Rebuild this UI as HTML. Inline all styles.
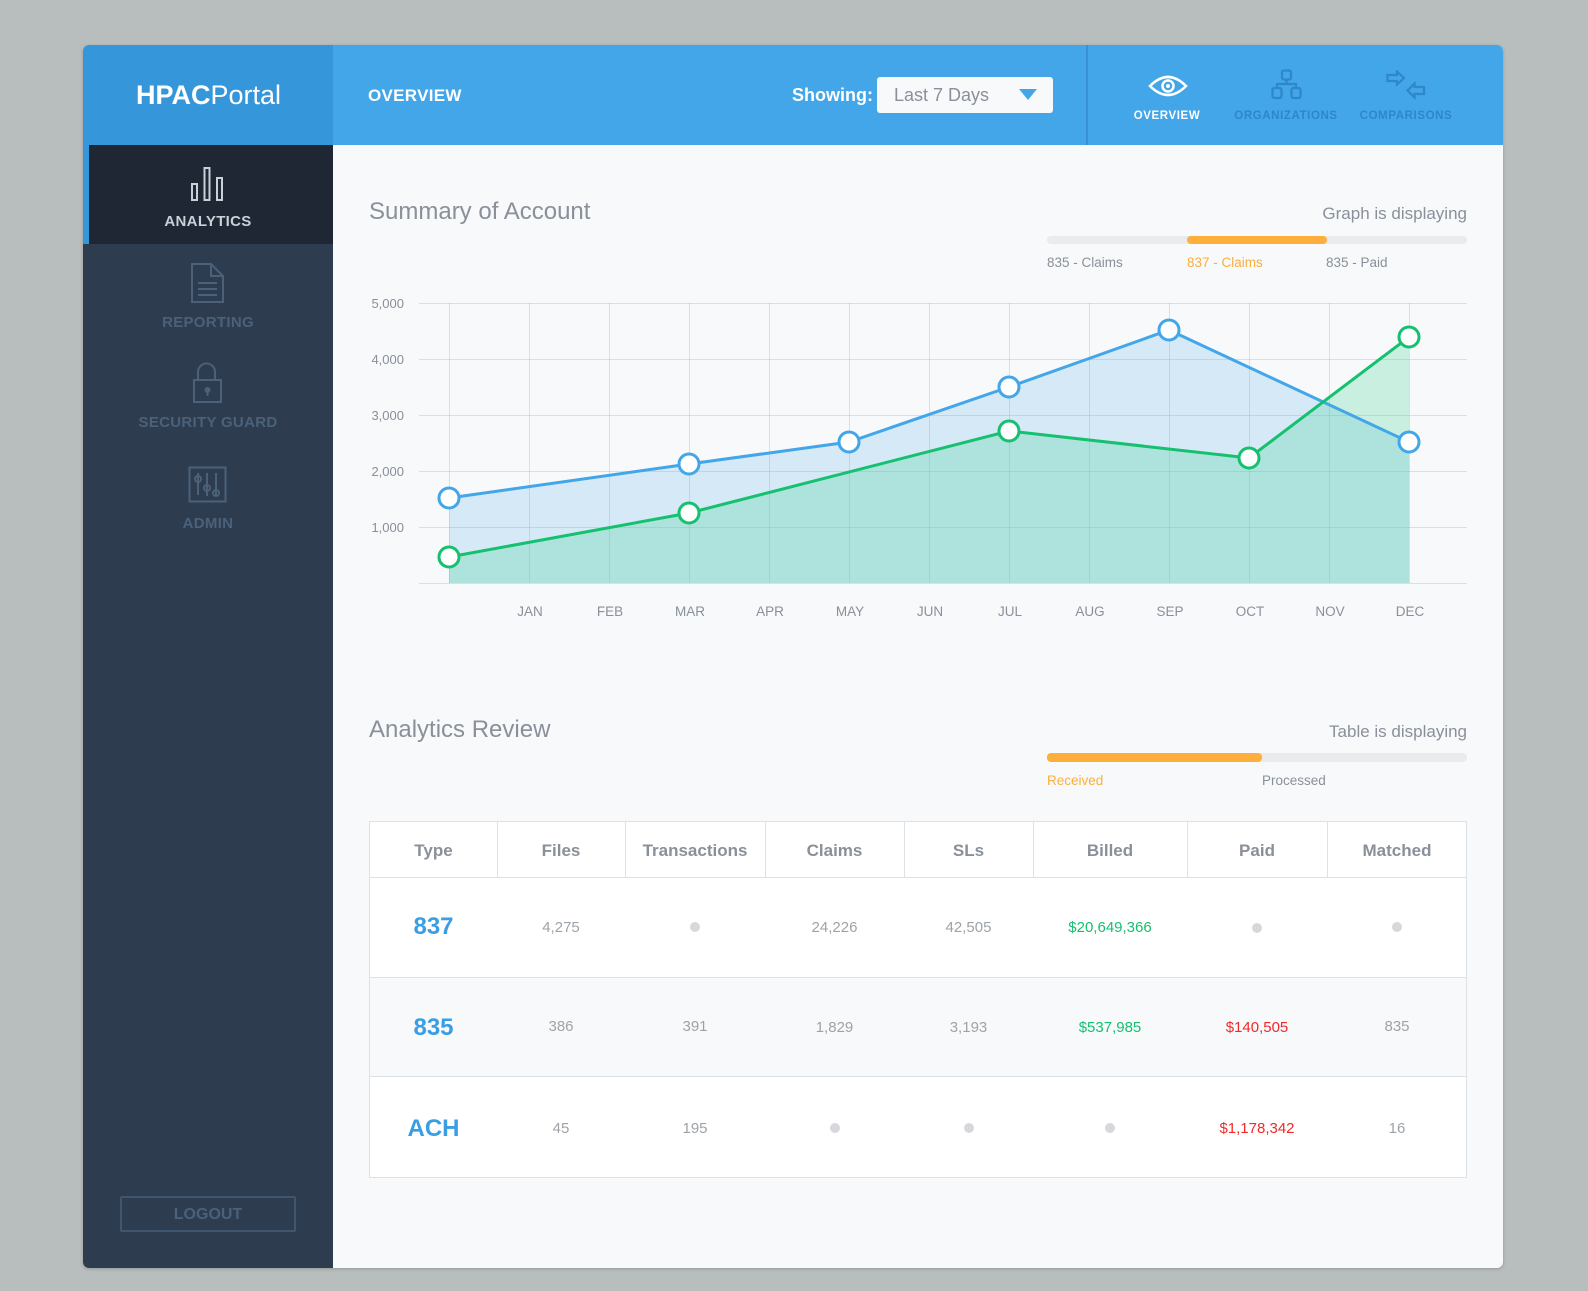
<!DOCTYPE html>
<html><head><meta charset="utf-8"><style>
*{margin:0;padding:0;box-sizing:border-box}
body{width:1588px;height:1291px;background:#b8bdbd;position:relative;overflow:hidden;font-family:"Liberation Sans",sans-serif}
.a{position:absolute;white-space:nowrap}
#card{position:absolute;left:83px;top:45px;width:1420px;height:1223px;border-radius:6px;overflow:hidden;background:#f7f9fb;box-shadow:0 1px 3px rgba(0,0,0,.2)}
.side{color:#4b6179;font-size:15px;font-weight:bold;letter-spacing:.3px;text-align:center;width:250px;left:83px}
.th{color:#8a9099;font-size:17px;font-weight:bold;text-align:center;top:841px}
.td{color:#9ea3a8;font-size:15px;text-align:center}
.ty{color:#3a9ee4;font-size:24px;font-weight:bold}
.dot{position:absolute;width:10px;height:10px;border-radius:5px;background:#d6d8db}
</style></head><body>
<div id="card"></div>
<div class="a" style="left:83px;top:45px;width:250px;height:100px;background:#3596d9;border-top-left-radius:6px"></div>
<div class="a" style="left:333px;top:45px;width:1170px;height:100px;background:#42a6e9;border-top-right-radius:6px"></div>
<div class="a" style="left:1086px;top:45px;width:2px;height:100px;background:#3791d3"></div>
<div class="a" style="left:136px;top:80px;color:#fff;font-size:27px"><b>HPAC</b>Portal</div>
<div class="a" style="left:368px;top:86px;color:#fff;font-size:17px;font-weight:bold;letter-spacing:.3px">OVERVIEW</div>
<div class="a" style="left:792px;top:85px;color:#fff;font-size:18px;font-weight:bold">Showing:</div>
<div class="a" style="left:877px;top:77px;width:176px;height:36px;background:#f7f9fb;border-radius:3px"></div>
<div class="a" style="left:894px;top:85px;color:#8a9099;font-size:18px">Last 7 Days</div>
<svg class="a" style="left:1019px;top:89px" width="18" height="12"><path d="M0 0H18L9 11Z" fill="#42a6e9"/></svg>
<svg class="a" style="left:1148px;top:75px" width="40" height="22"><path d="M2 11Q20 -7 38 11Q20 29 2 11Z" fill="none" stroke="#fff" stroke-width="2.5"/><circle cx="20" cy="11" r="5.5" fill="none" stroke="#fff" stroke-width="2.5"/><circle cx="20" cy="11" r="2" fill="#fff"/></svg>
<div class="a" style="left:1127px;top:110px;width:80px;text-align:center;color:#fff;font-size:11.5px;font-weight:bold;letter-spacing:.6px">OVERVIEW</div>
<svg class="a" style="left:1271px;top:69px" width="32" height="32" fill="none" stroke="#2f86c8" stroke-width="2.2"><rect x="11" y="1.5" width="9" height="9" rx="2"/><rect x="1.5" y="19" width="9" height="10" rx="2"/><rect x="20.5" y="19" width="9" height="10" rx="2"/><path d="M15.5 10.5V15M6 19V15H25V19"/></svg>
<div class="a" style="left:1226px;top:110px;width:120px;text-align:center;color:#2f86c8;font-size:11.5px;font-weight:bold;letter-spacing:.6px">ORGANIZATIONS</div>
<svg class="a" style="left:1386px;top:70px" width="40" height="30" fill="none" stroke="#2f86c8" stroke-width="2.2"><path d="M1.5 5H11V1.5L18 8L11 14.5V11H1.5Z"/><path d="M38 17H28.5V13.5L21.5 20.5L28.5 27.5V24H38Z"/></svg>
<div class="a" style="left:1346px;top:110px;width:120px;text-align:center;color:#2f86c8;font-size:11.5px;font-weight:bold;letter-spacing:.6px">COMPARISONS</div>
<div class="a" style="left:83px;top:145px;width:250px;height:1123px;background:#2d3c4f;border-bottom-left-radius:6px"></div>
<div class="a" style="left:83px;top:145px;width:250px;height:99px;background:#1e2733"></div>
<div class="a" style="left:83px;top:145px;width:6px;height:99px;background:#3596d9"></div>
<svg class="a" style="left:190px;top:166px" width="36" height="38" fill="none" stroke="#c8d0d8" stroke-width="2"><rect x="2" y="18" width="5" height="16"/><rect x="14.5" y="2" width="5" height="32"/><rect x="27" y="12" width="5" height="22"/></svg>
<div class="a side" style="top:213px;color:#c8d0d8">ANALYTICS</div>
<svg class="a" style="left:190px;top:262px" width="36" height="42" fill="none" stroke="#4b6179" stroke-width="2"><path d="M2 2H21L33 14V40H2Z M21 2V14H33"/><path d="M8 21H27M8 27H27M8 33H27"/></svg>
<div class="a side" style="top:314px">REPORTING</div>
<svg class="a" style="left:192px;top:362px" width="32" height="42" fill="none" stroke="#4b6179" stroke-width="2"><path d="M6 18V10A8.5 8.5 0 0 1 23 10V18"/><rect x="2" y="18" width="27" height="22"/><circle cx="15.5" cy="28" r="2" fill="#4b6179"/><path d="M15.5 29V34"/></svg>
<div class="a side" style="top:414px">SECURITY GUARD</div>
<svg class="a" style="left:188px;top:466px" width="40" height="38" fill="none" stroke="#4b6179" stroke-width="2"><rect x="1.5" y="1.5" width="36" height="34"/><path d="M10 7V29M19 7V30M28 7V29"/><circle cx="10" cy="13" r="3"/><circle cx="19" cy="22" r="3"/><circle cx="28" cy="27" r="3"/></svg>
<div class="a side" style="top:515px">ADMIN</div>
<div class="a" style="left:120px;top:1196px;width:176px;height:36px;border:2px solid #40566e;border-radius:2px;color:#4b6179;font-size:16px;font-weight:bold;text-align:center;line-height:34px">LOGOUT</div>
<div class="a" style="left:369px;top:198px;color:#8a9099;font-size:24px">Summary of Account</div>
<div class="a" style="left:1267px;top:204px;width:200px;text-align:right;color:#8a9099;font-size:17px">Graph is displaying</div>
<div class="a" style="left:1047px;top:236px;width:420px;height:8px;border-radius:4px;background:#e9ebed"></div>
<div class="a" style="left:1187px;top:236px;width:140px;height:8px;border-radius:4px;background:#fdae3c"></div>
<div class="a" style="left:1047px;top:255px;color:#8a9099;font-size:13.5px">835 - Claims</div>
<div class="a" style="left:1187px;top:255px;color:#fdae3c;font-size:13.5px">837 - Claims</div>
<div class="a" style="left:1326px;top:255px;color:#8a9099;font-size:13.5px">835 - Paid</div>
<svg class="a" style="left:0;top:0" width="1588" height="640">
<g font-family="Liberation Sans" font-size="13" fill="#8a9099" text-anchor="end">
<text x="404" y="308">5,000</text><text x="404" y="364">4,000</text><text x="404" y="420">3,000</text><text x="404" y="476">2,000</text><text x="404" y="532">1,000</text></g>
<path d="M449 498L689 464L849 442L1009 387L1169 330L1409 442V583H449Z" fill="#d5e9f7"/>
<path d="M449 557L689 513L1009 431L1249 458L1409 337V583H449Z" fill="rgb(20,200,120)" fill-opacity=".2"/>
<g stroke="#9aa3ad" stroke-opacity=".3" stroke-width="1">
<path d="M419 303.5H1467M419 359.5H1467M419 415.5H1467M419 471.5H1467M419 527.5H1467M419 583.5H1467"/>
<path d="M449.5 303V583M529.5 303V583M609.5 303V583M689.5 303V583M769.5 303V583M849.5 303V583M929.5 303V583M1009.5 303V583M1089.5 303V583M1169.5 303V583M1249.5 303V583M1329.5 303V583M1409.5 303V583"/></g>
<path d="M449 498L689 464L849 442L1009 387L1169 330L1409 442" fill="none" stroke="#42a6e9" stroke-width="3"/>
<path d="M449 557L689 513L1009 431L1249 458L1409 337" fill="none" stroke="#15c06e" stroke-width="3"/>
<g fill="#fff" stroke="#42a6e9" stroke-width="3"><circle cx="449" cy="498" r="10"/><circle cx="689" cy="464" r="10"/><circle cx="849" cy="442" r="10"/><circle cx="1009" cy="387" r="10"/><circle cx="1169" cy="330" r="10"/><circle cx="1409" cy="442" r="10"/></g>
<g fill="#fff" stroke="#15c06e" stroke-width="3"><circle cx="449" cy="557" r="10"/><circle cx="689" cy="513" r="10"/><circle cx="1009" cy="431" r="10"/><circle cx="1249" cy="458" r="10"/><circle cx="1409" cy="337" r="10"/></g>
<g font-family="Liberation Sans" font-size="13.5" fill="#8a9099" text-anchor="middle">
<text x="530" y="616">JAN</text><text x="610" y="616">FEB</text><text x="690" y="616">MAR</text><text x="770" y="616">APR</text><text x="850" y="616">MAY</text><text x="930" y="616">JUN</text><text x="1010" y="616">JUL</text><text x="1090" y="616">AUG</text><text x="1170" y="616">SEP</text><text x="1250" y="616">OCT</text><text x="1330" y="616">NOV</text><text x="1410" y="616">DEC</text></g>
</svg>
<div class="a" style="left:369px;top:716px;color:#8a9099;font-size:24px">Analytics Review</div>
<div class="a" style="left:1267px;top:722px;width:200px;text-align:right;color:#8a9099;font-size:17px">Table is displaying</div>
<div class="a" style="left:1047px;top:753px;width:420px;height:9px;border-radius:4px;background:#e9ebed"></div>
<div class="a" style="left:1047px;top:753px;width:215px;height:9px;border-radius:4px;background:#fdae3c"></div>
<div class="a" style="left:1047px;top:773px;color:#fdae3c;font-size:13.5px">Received</div>
<div class="a" style="left:1262px;top:773px;color:#8a9099;font-size:13.5px">Processed</div>
<div class="a" style="left:369px;top:821px;width:1098px;height:357px;background:#fff;border:1px solid #dfe2e5"></div>
<div class="a" style="left:370px;top:977px;width:1096px;height:100px;background:#f7f9fb;border-top:1px solid #dfe2e5;border-bottom:1px solid #dfe2e5"></div>
<div class="a" style="left:370px;top:877px;width:1096px;height:1px;background:#dfe2e5"></div>
<div class="a" style="left:497px;top:822px;width:1px;height:55px;background:#dfe2e5"></div>
<div class="a" style="left:625px;top:822px;width:1px;height:55px;background:#dfe2e5"></div>
<div class="a" style="left:765px;top:822px;width:1px;height:55px;background:#dfe2e5"></div>
<div class="a" style="left:904px;top:822px;width:1px;height:55px;background:#dfe2e5"></div>
<div class="a" style="left:1033px;top:822px;width:1px;height:55px;background:#dfe2e5"></div>
<div class="a" style="left:1187px;top:822px;width:1px;height:55px;background:#dfe2e5"></div>
<div class="a" style="left:1327px;top:822px;width:1px;height:55px;background:#dfe2e5"></div>
<div class="a th" style="left:370px;width:127px">Type</div>
<div class="a th" style="left:497px;width:128px">Files</div>
<div class="a th" style="left:625px;width:140px">Transactions</div>
<div class="a th" style="left:765px;width:139px">Claims</div>
<div class="a th" style="left:904px;width:129px">SLs</div>
<div class="a th" style="left:1033px;width:154px">Billed</div>
<div class="a th" style="left:1187px;width:140px">Paid</div>
<div class="a th" style="left:1327px;width:140px">Matched</div>
<div class="a ty" style="left:370px;width:127px;text-align:center;top:913px">837</div>
<div class="a td" style="left:497px;width:128px;top:919px">4,275</div>
<div class="dot" style="left:690px;top:922px"></div>
<div class="a td" style="left:765px;width:139px;top:919px">24,226</div>
<div class="a td" style="left:904px;width:129px;top:919px">42,505</div>
<div class="a td" style="left:1033px;width:154px;top:919px;color:#15c06e">$20,649,366</div>
<div class="dot" style="left:1252px;top:923px"></div>
<div class="dot" style="left:1392px;top:922px"></div>
<div class="a ty" style="left:370px;width:127px;text-align:center;top:1014px">835</div>
<div class="a td" style="left:497px;width:128px;top:1018px">386</div>
<div class="a td" style="left:625px;width:140px;top:1018px">391</div>
<div class="a td" style="left:765px;width:139px;top:1019px">1,829</div>
<div class="a td" style="left:904px;width:129px;top:1019px">3,193</div>
<div class="a td" style="left:1033px;width:154px;top:1019px;color:#15c06e">$537,985</div>
<div class="a td" style="left:1187px;width:140px;top:1019px;color:#ef2a2a">$140,505</div>
<div class="a td" style="left:1327px;width:140px;top:1018px">835</div>
<div class="a ty" style="left:370px;width:127px;text-align:center;top:1115px">ACH</div>
<div class="a td" style="left:497px;width:128px;top:1120px">45</div>
<div class="a td" style="left:625px;width:140px;top:1120px">195</div>
<div class="dot" style="left:830px;top:1123px"></div>
<div class="dot" style="left:964px;top:1123px"></div>
<div class="dot" style="left:1105px;top:1123px"></div>
<div class="a td" style="left:1187px;width:140px;top:1120px;color:#ef2a2a">$1,178,342</div>
<div class="a td" style="left:1327px;width:140px;top:1120px">16</div>
</body></html>
